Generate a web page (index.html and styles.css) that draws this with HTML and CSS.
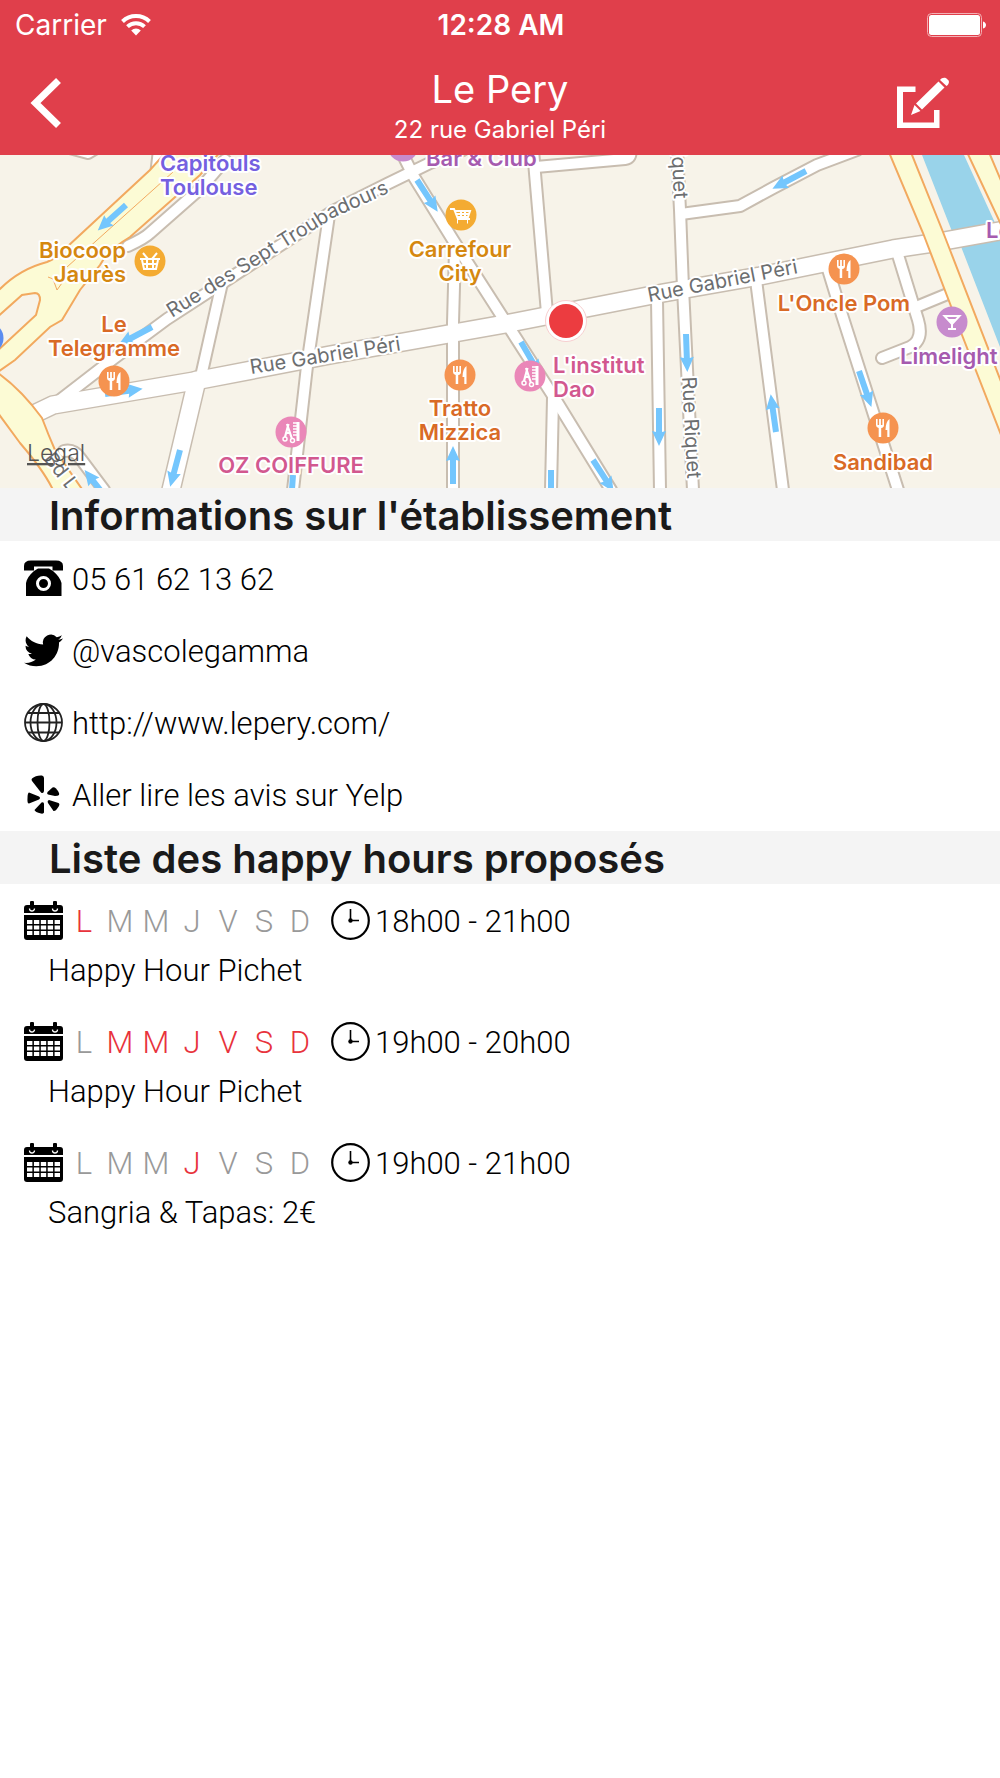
FILE: index.html
```
<!DOCTYPE html>
<html lang="fr">
<head>
    <meta charset="UTF-8">
    <meta name="viewport" content="width=device-width, initial-scale=1.0">
    <title>Le Pery</title>
    <link rel="stylesheet" href="styles.css">
</head>
<body>
    <!-- Shared icons -->
    <svg class="sprite" aria-hidden="true">
        <symbol id="calendar" viewBox="0 0 39 39">
            <path d="M3 4h3V1.500a1.500 1.500 0 0 1 4 0V4h19V1.500a1.500 1.500 0 0 1 4 0V4h3a3 3 0 0 1 3 3v5H0V7a3 3 0 0 1 3-3z"/>
            <path d="M0 14h39v22a3 3 0 0 1-3 3H3a3 3 0 0 1-3-3z"/>
            <path d="M5.500 7.500a2.500 2.500 0 0 0 5 0M28.500 7.500a2.500 2.500 0 0 0 5 0" fill="none" stroke="#fff" stroke-width="1.300"/>
            <path d="M3 21h33M3 26.500h33M3 32h33" stroke="#fff" stroke-width="4" stroke-dasharray="5.400 1.500"/>
        </symbol>
        <symbol id="clock" viewBox="0 0 39 39">
            <circle cx="19.500" cy="19.500" r="18.300" fill="none" stroke="#000" stroke-width="2.200"/>
            <path d="M19.500 8v11.500H28" fill="none" stroke="#000" stroke-width="1.600"/>
            <circle cx="19.500" cy="19.500" r="2.200"/>
        </symbol>
    </svg>

    <header class="header">
        <div class="status-bar">
            <div class="carrier">
                <span>Carrier</span>
                <svg width="30" height="22" viewBox="0 0 30 22" fill="none" stroke="#fff" stroke-width="4">
                    <path d="M1.500 7.500a19.500 19.500 0 0 1 27 0"/>
                    <path d="M6.500 12.600a12.500 12.500 0 0 1 17 0"/>
                    <path d="M10.200 16.500a7 7 0 0 1 9.600 0L15 21.500z" fill="#fff" stroke="none"/>
                </svg>
            </div>
            <span class="time">12:28 AM</span>
            <svg class="battery" width="60" height="24" viewBox="0 0 60 24">
                <rect x="0.500" y="0.500" width="54" height="23" rx="4" fill="none" stroke="#f3b0b5"/>
                <rect x="2" y="2" width="51" height="20" rx="2.500" fill="#fff"/>
                <path d="M56 8.500c4 1 4 6 0 7z" fill="#fff"/>
            </svg>
        </div>
        <nav class="nav">
            <button class="nav-btn" type="button" aria-label="Retour">
                <svg width="32" height="52" viewBox="0 0 32 52"><path d="M28.500 3.500L5.500 26l23 22.500" fill="none" stroke="#fff" stroke-width="7"/></svg>
            </button>
            <div class="nav-title">
                <h1>Le Pery</h1>
                <p>22 rue Gabriel Péri</p>
            </div>
            <button class="nav-btn edit-btn" type="button" aria-label="Modifier">
                <svg width="52" height="52" viewBox="0 0 52 52" fill="#fff">
                    <path d="M0 9.500h18.500V15H6v30.500h31V33h5.500v18H0z"/>
                    <path d="M41.500 4.500l6 6-22.500 22-6-6zM17.500 28l6 6L14 38z"/>
                    <path d="M43 3c2-3 6-3 7.500-0.500C53 4 52 7.500 49.500 9z"/>
                </svg>
            </button>
        </nav>
    </header>

    <section class="map">
        <svg viewBox="0 155 1000 333">
            <defs>
                <g id="main-street">
                    <path d="M30 416L53 405L200 380L330 355L510 323L663 293L760 276L893 249L933 243L1010 229"/>
                    <path d="M197 380L171 490"/>
                </g>
                <g id="streets">
                    <path d="M60 400L113 359L167 319L333 211L387 184L430 163L463 150"/>
                    <path d="M222 283L202 372"/>
                    <path d="M329 215L307 366L293 490"/>
                    <path d="M403 155L414 177L453 240L505 321L557 402L611 490"/>
                    <path d="M455 250L453 323V490"/>
                    <path d="M533 150L547 313"/>
                    <path d="M536 167L625 159Q632 158 630 150"/>
                    <path d="M553 398L551 490"/>
                    <path d="M657 300L660 490"/>
                    <path d="M677 150L680 210L683 288L693 490"/>
                    <path d="M681 214L740 206L773 188L817 165L857 150"/>
                    <path d="M756 280L783 490"/>
                    <path d="M827 266L842 315L898 490"/>
                    <path d="M898 255L918 320Q924 340 910 347L882 358"/>
                    <path d="M916 307L950 293"/>
                    <path d="M64 451Q74 449 80 458L104 490"/>
                    <path d="M128 246Q145 238 150 233L200 189L225 160"/>
                    <path d="M159 150L156 175"/>
                    <path d="M66 147L88 153L98 147"/>
                </g>
                <path id="troubadours" d="M172 318L333 218L395 190"/>
                <path id="arrow" d="M0-3H24L23-7L38 0L23 7L24 3H0z"/>
                <g id="food" fill="#fff">
                    <path d="M-7-9h1.600v6h1.500v-6h1.800v6h1.500v-6H1V-3Q1-0.500-1.800 0V9h-2.500V0Q-7-0.500-7-3z"/>
                    <path d="M6.500-9V9H4.300V2H2.500Q2.500-6 6.500-9z"/>
                </g>
                <g id="hair" fill="none" stroke="#fff" stroke-width="1.500">
                    <path d="M-4-8L1 7M-2.500-8L-6 5M-5 1h4" stroke-width="2.200"/>
                    <circle cx="-6" cy="7" r="2"/>
                    <circle cx="1.500" cy="8.500" r="2"/>
                    <path d="M7-10V9" class="comb"/>
                    <path d="M2-9h4M2-6h4M2-3h4M2 0h4M2 3h4"/>
                </g>
            </defs>

            <rect class="land" y="155" width="1000" height="333"/>
            <path class="water" d="M922 155H964L996 225L953 234zM960 244L1000 235V347z"/>

            <use href="#streets" class="edge minor"/>
            <use href="#main-street" class="edge major"/>
            <use href="#streets" class="fill minor"/>
            <use href="#main-street" class="fill major"/>

            <!-- Boulevards -->
            <g class="boulevard">
                <path d="M-5 292L0 289Q20 269 47 262Q58 258 67 247L150 170L168 150H222L200 175L130 237Q108 250 100 265L80 290L62 320L50 327L15 360L-5 374V353L36 315L40 300Q40 293 35 293L22 295L-5 319z"/>
                <path d="M-5 371Q20 388 42 418Q48 434 55 450L84 492H54Q45 472 20 443L-5 409z"/>
                <path d="M173 172L67 267M48 277L53 279L57 290L67 276" fill="none" stroke-width="1"/>
                <path d="M888 150L923 233L962 335L1005 445V392L950 250L943 232L910 150z"/>
                <path d="M966 150L1005 233V190L988 150z"/>
            </g>

            <g class="arrows">
                <use href="#arrow" transform="translate(126 205) rotate(138)"/>
                <use href="#arrow" transform="translate(152 327) rotate(152)"/>
                <use href="#arrow" transform="translate(105 394) rotate(-8)"/>
                <use href="#arrow" transform="translate(180 450) rotate(105)"/>
                <use href="#arrow" transform="translate(293 475) rotate(94)"/>
                <use href="#arrow" transform="translate(108 500) rotate(-128)"/>
                <use href="#arrow" transform="translate(417 180) rotate(57)"/>
                <use href="#arrow" transform="translate(521 342) rotate(60)"/>
                <use href="#arrow" transform="translate(453 484) rotate(-90)"/>
                <use href="#arrow" transform="translate(551 470) rotate(90)"/>
                <use href="#arrow" transform="translate(593 460) rotate(57)"/>
                <use href="#arrow" transform="translate(659 408) rotate(90)"/>
                <use href="#arrow" transform="translate(806 171) rotate(152)"/>
                <use href="#arrow" transform="translate(686 334) rotate(88)"/>
                <use href="#arrow" transform="translate(776 432) rotate(-98)"/>
                <use href="#arrow" transform="translate(859 371) rotate(71)"/>
            </g>

            <g class="street-name">
                <text><textPath href="#troubadours">Rue des Sept Troubadours</textPath></text>
                <text transform="translate(251 374) rotate(-9)">Rue Gabriel Péri</text>
                <text transform="translate(649 302) rotate(-11)">Rue Gabriel Péri</text>
                <text transform="translate(682 377) rotate(87)">Rue Riquet</text>
                <text transform="translate(674 199) rotate(87)" text-anchor="end">Rue Riquet</text>
                <text transform="translate(43 459) rotate(52)">Bd L</text>
            </g>

            <!-- Places -->
            <g class="pins">
                <circle cx="150" cy="261" r="15.500" fill="#f4ab32"/>
                <path d="M140 259h20M142 260l2 9h12l2-9M142 264h15M147 260v9M153 260v9M143 253l5 6M157 253l-5 6"/>
                <circle cx="461" cy="215" r="15.500" fill="#f4ab32"/>
                <path d="M450 209h4l4 10h12M455 211h15l-2 6h-11M456 214h13M461 211v6M465 211v6"/>
                <path d="M457 221.500h1M467 221.500h1" class="wheels"/>
                <g fill="#f59350">
                    <circle cx="114" cy="381" r="15.500"/>
                    <circle cx="460" cy="375" r="15.500"/>
                    <circle cx="844" cy="269" r="15.500"/>
                    <circle cx="883" cy="428" r="15.500"/>
                </g>
                <use href="#food" x="114" y="381"/>
                <use href="#food" x="460" y="375"/>
                <use href="#food" x="844" y="269"/>
                <use href="#food" x="883" y="428"/>
                <circle cx="291" cy="432" r="15.500" fill="#ea87b8"/>
                <circle cx="530" cy="376" r="15.500" fill="#ea87b8"/>
                <use href="#hair" x="291" y="432"/>
                <use href="#hair" x="530" y="376"/>
                <circle cx="952" cy="322" r="15.500" fill="#c78bcd"/>
                <path d="M944.500 316h15l-7.500 8zM952 323v6M948 329h8"/>
                <path d="M948 319h8l-4 4z" class="drink"/>
                <circle cx="403" cy="146" r="15.500" fill="#c78bcd"/>
                <circle cx="-12" cy="338" r="15.500" fill="#5b8cf0"/>
            </g>

            <g class="place">
                <text fill="#7560e0"><tspan x="160" y="171">Capitouls</tspan><tspan x="160" y="195">Toulouse</tspan></text>
                <text fill="#d58810" text-anchor="end"><tspan x="126" y="258">Biocoop</tspan><tspan x="126" y="282">Jaurès</tspan></text>
                <g text-anchor="middle">
                    <text fill="#d58810"><tspan x="460" y="257">Carrefour</tspan><tspan x="460" y="281">City</tspan></text>
                    <text fill="#d96a26"><tspan x="114" y="332">Le</tspan><tspan x="114" y="356">Telegramme</tspan></text>
                    <text fill="#d96a26"><tspan x="460" y="416">Tratto</tspan><tspan x="460" y="440">Mizzica</tspan></text>
                    <text x="844" y="311" fill="#d96a26">L'Oncle Pom</text>
                    <text x="883" y="470" fill="#d96a26">Sandibad</text>
                    <text x="291" y="473" fill="#d2588f">OZ COIFFURE</text>
                </g>
                <text fill="#d2588f"><tspan x="553" y="373">L'institut</tspan><tspan x="553" y="397">Dao</tspan></text>
                <g fill="#a65baf">
                    <text x="426" y="166">Bar &amp; Club</text>
                    <text x="900" y="364">Limelight</text>
                    <text x="986" y="238">Le</text>
                </g>
            </g>

            <circle cx="566" cy="321" r="20.500" fill="#fff" stroke="#f7cfd0" stroke-width="1"/>
            <circle cx="566" cy="321" r="17" fill="#ec3c40"/>

            <a href="#legal"><text class="legal" x="27" y="461">Legal</text></a>
        </svg>
    </section>

    <main>
        <h2>Informations sur l'établissement</h2>
        <ul class="infos">
            <li>
                <svg class="icon" viewBox="0 0 39 39">
                    <path d="M0 11.500V7Q0 1.500 7 1.500H32Q39 1.500 39 7v4.500H28.500V7.500H10v4z"/>
                    <path d="M14 9.500h11L29 12Q36 18 37.500 24v13H2V24Q3 18 10 12z"/>
                    <circle cx="19.500" cy="24.500" r="6" fill="none" stroke="#fff" stroke-width="3"/>
                </svg>
                <a href="tel:0561621362">05 61 62 13 62</a>
            </li>
            <li>
                <svg class="icon" viewBox="0 0 24 24"><path d="M23.950 4.570a10 10 0 0 1-2.820.770 4.960 4.960 0 0 0 2.160-2.720c-.950.550-2 .950-3.130 1.180a4.920 4.920 0 0 0-8.380 4.480C7.690 8.090 4.070 6.130 1.640 3.160a4.820 4.820 0 0 0-.670 2.480c0 1.710.870 3.210 2.190 4.100a4.900 4.900 0 0 1-2.230-.620v.060a4.920 4.920 0 0 0 3.950 4.830 5 5 0 0 1-2.210.080 4.940 4.940 0 0 0 4.600 3.420A9.870 9.870 0 0 1 0 19.540a14 14 0 0 0 7.550 2.210c9.050 0 14-7.500 14-13.990 0-.210 0-.420-.020-.630a9.940 9.940 0 0 0 2.460-2.550z"/></svg>
                <a href="#twitter">@vascolegamma</a>
            </li>
            <li>
                <svg class="icon" viewBox="0 0 39 39" fill="none" stroke="#222" stroke-width="1.800">
                    <circle cx="19.500" cy="19.500" r="18.500"/>
                    <ellipse cx="19.500" cy="19.500" rx="13" ry="18.500"/>
                    <ellipse cx="19.500" cy="19.500" rx="6" ry="18.500"/>
                    <path d="M4 10h31M1 19.500h37M4 29.500h31"/>
                </svg>
                <a href="http://www.lepery.com/">http://www.lepery.com/</a>
            </li>
            <li>
                <svg class="icon" viewBox="0 0 39 39">
                    <path d="M8 3.500Q12 0 18 0.500Q20 1 20 3V16Q19.500 19 17 17.500L8 6Q7 4.500 8 3.500z"/>
                    <path d="M5 17.500L15 21.500Q17 23 15 24.500L5 28.500Q3 28.500 3.500 23Q3.500 18 5 17.500z"/>
                    <path d="M24 19.500Q22.500 19 23.500 17L28.500 12.500Q30 11.500 32 13.500Q36 18 35 20Q34 21 31 21z"/>
                    <path d="M25 25L34.500 28Q36.500 29 34 32.500Q31.500 36.500 29.500 36L24 28Q23 25.500 25 25z"/>
                    <path d="M17.500 27.500Q20 26.500 20 29V37.500Q19.500 39 17 38.500Q11 37 10.500 35z"/>
                </svg>
                <a href="#yelp">Aller lire les avis sur Yelp</a>
            </li>
        </ul>

        <h2>Liste des happy hours proposés</h2>
        <ul class="happy-hours">
            <li>
                <div class="schedule">
                    <svg class="icon"><use href="#calendar"/></svg>
                    <div class="days"><span class="on">L</span><span>M</span><span>M</span><span>J</span><span>V</span><span>S</span><span>D</span></div>
                    <svg class="icon"><use href="#clock"/></svg>
                    <span class="hours">18h00 - 21h00</span>
                </div>
                <p>Happy Hour Pichet</p>
            </li>
            <li>
                <div class="schedule">
                    <svg class="icon"><use href="#calendar"/></svg>
                    <div class="days"><span>L</span><span class="on">M</span><span class="on">M</span><span class="on">J</span><span class="on">V</span><span class="on">S</span><span class="on">D</span></div>
                    <svg class="icon"><use href="#clock"/></svg>
                    <span class="hours">19h00 - 20h00</span>
                </div>
                <p>Happy Hour Pichet</p>
            </li>
            <li>
                <div class="schedule">
                    <svg class="icon"><use href="#calendar"/></svg>
                    <div class="days"><span>L</span><span>M</span><span>M</span><span class="on">J</span><span>V</span><span>S</span><span>D</span></div>
                    <svg class="icon"><use href="#clock"/></svg>
                    <span class="hours">19h00 - 21h00</span>
                </div>
                <p>Sangria &amp; Tapas: 2€</p>
            </li>
        </ul>
    </main>
</body>
</html>
```
FILE: styles.css
```
* { margin: 0; padding: 0; box-sizing: border-box; }
body { background: #fff; color: #000; font-family: Roboto, sans-serif; font-size: 31px; font-weight: 300; }
ul { list-style: none; }
a { color: inherit; text-decoration: none; }
.sprite { display: none; }

/* Header */
.header { background: #e03f4b; color: #fff; font-family: Inter, sans-serif; }
.status-bar { display: grid; grid-template-columns: 1fr auto 1fr; align-items: center; height: 50px; padding: 0 13px 0 15px; font-size: 28px; font-weight: 400; }
.carrier { display: flex; align-items: center; gap: 14px; }
.time { font-weight: 600; }
.battery { justify-self: end; }
.nav { display: grid; grid-template-columns: 1fr auto 1fr; align-items: center; height: 105px; padding: 0 30px; }
.nav-btn { background: none; border: none; cursor: pointer; justify-self: start; line-height: 0; }
.edit-btn { justify-self: end; margin-right: 21px; }
.nav-title { text-align: center; padding-top: 4px; }
.nav-title h1 { font-size: 38px; font-weight: 400; line-height: 50px; }
.nav-title p { font-size: 24px; font-weight: 400; line-height: 32px; }

/* Map */
.map svg { display: block; width: 100%; }
.land { fill: #f7f3e9; }
.water { fill: #99d3ea; }
.edge, .fill { fill: none; stroke-linecap: round; stroke-linejoin: round; }
.edge { stroke: #c8bdb0; }
.fill { stroke: #fff; }
.edge.minor { stroke-width: 14; }
.fill.minor { stroke-width: 10; }
.edge.major { stroke-width: 20; }
.fill.major { stroke-width: 17; }
.boulevard { fill: #fcfbd5; stroke: #f2a95f; stroke-width: 2; }
.arrows { fill: #74c6fd; }
.street-name, .place { font-family: Inter, sans-serif; stroke: #fff; stroke-width: 4; stroke-linejoin: round; paint-order: stroke; }
.street-name { fill: #6c6e70; font-size: 20px; font-weight: 400; }
.place { font-size: 22px; font-weight: 600; }
.pins > path { fill: none; stroke: #fff; stroke-width: 2; }
.pins > .wheels { stroke-width: 4; }
.pins > .drink { fill: #fff; stroke: none; }
.comb { stroke-width: 3; }
.legal { fill: #555; font-family: Inter, sans-serif; font-size: 23px; text-decoration: underline; }

/* Sections */
h2 { background: #f4f4f4; color: #1a1a1a; font-family: Inter, sans-serif; font-size: 40px; font-weight: 600; line-height: 51px; padding: 2px 0 0 49px; }
.icon { width: 39px; height: 39px; flex: none; }
.infos { padding: 1px 0; }
.infos li { display: flex; align-items: center; gap: 9px; height: 72px; padding-left: 24px; }
.infos a { padding-top: 3px; }
.happy-hours li { height: 121px; }
.schedule { display: flex; align-items: center; height: 73px; padding-left: 24px; }
.days { display: flex; padding: 2px 13px 0 3px; color: #999; }
.days span { width: 36px; text-align: center; }
.days .on { color: #e8333c; }
.hours { padding: 2px 0 0 5px; }
.happy-hours p { padding-left: 48px; line-height: 28px; }
```
